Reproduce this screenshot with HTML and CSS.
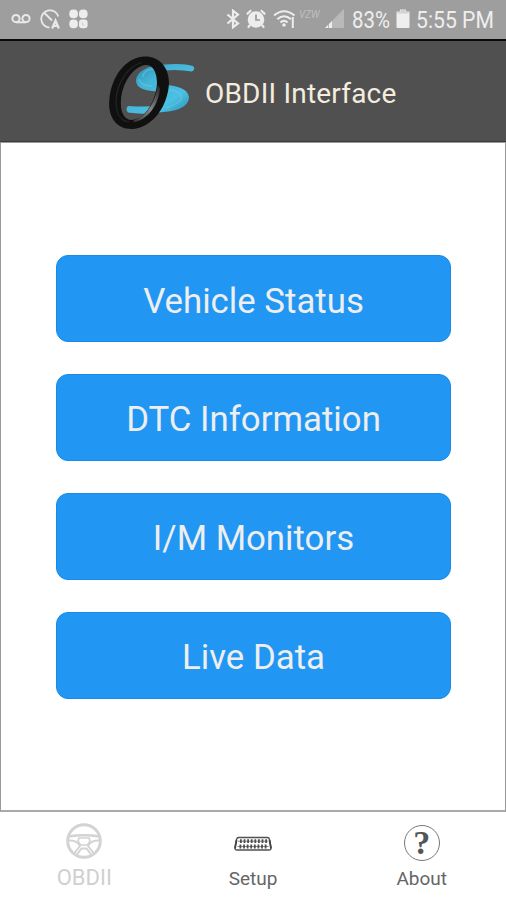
FILE: index.html
```html
<!DOCTYPE html>
<html lang="en">
<head>
    <meta charset="UTF-8">
    <title>OBDII Interface</title>
    <link rel="stylesheet" href="styles.css">
</head>
<body>
<div class="status-bar">
    <div class="status-left">
        <svg width="20" height="20" viewBox="0 0 20 20" fill="none" stroke="#e9e9e9" stroke-width="2">
            <circle cx="5" cy="9.5" r="3.6"/>
            <circle cx="15" cy="9.5" r="3.6"/>
            <path d="M5 13.3h10"/>
        </svg>
        <svg width="20" height="20" viewBox="0 0 20 20" fill="none" stroke="#e9e9e9" stroke-width="1.8">
            <path d="M18.3 7.5A8.7 8.7 0 1 0 9.5 18.7M4 3.5l8 8"/>
            <path d="M12.1 19.5l3.4-8 3.4 8M13.3 16.8h4.4" stroke-width="2.2"/>
        </svg>
        <svg width="19" height="20" viewBox="0 0 19 20" fill="#ededed">
            <rect x="0.3" y="0.5" width="8.6" height="8.8" rx="4"/>
            <rect x="10" y="0.5" width="8.6" height="8.8" rx="4"/>
            <rect x="0.3" y="10.5" width="8.6" height="8.8" rx="4"/>
            <rect x="10" y="10.5" width="8.6" height="8.8" rx="3"/>
            <path d="M13.5 13v3h2" fill="none" stroke="#d0d0d0"/>
        </svg>
    </div>
    <div class="status-right">
        <svg width="14" height="20" viewBox="0 0 14 20" fill="none" stroke="#ededed" stroke-width="2.2">
            <path d="M1.5 5.5L12 14.5L7 18.3V1.7L12 5.5L1.5 14.5"/>
        </svg>
        <svg class="alarm" width="20" height="20" viewBox="0 0 20 20">
            <circle cx="10" cy="10.5" r="8.3" fill="#ededed"/>
            <path d="M0.8 5.2L5.2 1.2M19.2 5.2L14.8 1.2M4 16l-2 2.7M16 16l2 2.7" stroke="#ededed" stroke-width="2.2"/>
            <path d="M10 5.5V11h4" fill="none" stroke="#999" stroke-width="1.7"/>
        </svg>
        <svg class="wifi" width="23" height="20" viewBox="0 0 23 20" fill="none" stroke="#ededed" stroke-width="2">
            <path d="M1 6.5Q11 -2 21.5 6.5M4.3 10.2Q11 4.2 18 10.2M7.4 13.5Q11 10.3 14.6 13.5"/>
            <circle cx="11" cy="16" r="1.8" fill="#ededed" stroke="none"/>
            <path d="M19.8 8v11" stroke-width="2"/>
        </svg>
        <span class="carrier">VZW</span>
        <svg class="signal" width="20" height="20" viewBox="0 0 20 20">
            <path d="M0 19L19 0V19z" fill="#b9b9b9"/>
            <path d="M0 19L3 16V19zM4 19V15L7 12V19z" fill="#ededed"/>
        </svg>
        <span class="percent">83%</span>
        <svg class="battery" width="14" height="20" viewBox="0 0 14 20">
            <path d="M4 0.5h6v2h2.5q1 0 1 1V18q0 1-1 1H1.5q-1 0-1-1V3.5q0-1 1-1H4z" fill="#eee"/>
            <path d="M4.5 1h5v2h3v1.5h-11V3h3z" fill="#d2d2d2"/>
        </svg>
        <span class="clock">5:55 PM</span>
    </div>
</div>

<div class="header">
    <svg class="logo" width="90" height="80" viewBox="0 0 90 80">
        <defs>
            <linearGradient id="blue" x1="0" y1="0" x2="1" y2="1">
                <stop offset="0" stop-color="#2489a8"/>
                <stop offset="0.35" stop-color="#45b4d6"/>
                <stop offset="0.7" stop-color="#4bc0e3"/>
                <stop offset="1" stop-color="#238aaa"/>
            </linearGradient>
            <linearGradient id="face" x1="1" y1="0" x2="0" y2="1">
                <stop offset="0" stop-color="#222"/>
                <stop offset="0.5" stop-color="#858585"/>
                <stop offset="1" stop-color="#303030"/>
            </linearGradient>
        </defs>
        <path d="M84 11Q75 8 55 9.5C38 10 28 17 27 25C27 34 37 35.5 47 36.5L54 46C50 51 40 52.5 19 51Q16 54 19 57.5Q34 60 54 57C70 56 80 51 80 42C79 34 69 31 58 30L51 29C46 27 47 18 55 15.5Q69 14 83 16.5Q87 14 84 11z" fill="url(#blue)"/>
        <path d="M34 22Q34 15 44 14M30 24Q32 31 43 31M61 35Q78 38 70 47Q64 51 57 53" fill="none" stroke="#6acbe8" stroke-width="1.5" opacity=".5"/>
        <path fill-rule="evenodd" fill="#101010" d="M33 1.7C49 0 60 11 60 28C59 51 44 72 24 74C7 75 -2 61 .5 43C3 21 16 4 33 1.7zM36 10C24 12 13 28 12 45C11 57 15 65 23 65C37 64 47 45 48 28C48 16 43 9 36 10z"/>
        <path d="M48.5 30C47 47 37 62 25 65L24 67C38 66 50 50 51 33z" fill="url(#face)"/>
        <path d="M33 7.500C19 11 7 29 7 47C7 59 12 66 20 67" fill="none" stroke="#252525" stroke-width="1.2"/>
    </svg>
    <h1>OBDII Interface</h1>
</div>

<div class="menu">
    <button class="menu-button">Vehicle Status</button>
    <button class="menu-button">DTC Information</button>
    <button class="menu-button">I/M Monitors</button>
    <button class="menu-button">Live Data</button>
</div>

<div class="tabs">
    <div class="tab active">
        <svg width="38" height="38" viewBox="0 0 38 38" fill="none" stroke="#d3d3d3" stroke-width="2">
            <circle cx="19" cy="19" r="16.3" stroke-width="3"/>
            <path d="M3.5 14.5Q19 12 34.500 14.5" stroke-width="2.4"/>
            <path d="M4 18.5Q12 18 15 24L9.500 31M34 18.5Q26 18 23 24L28.5 31"/>
            <path d="M14 16h10l1 3-2.500 4h-7L13 19z" stroke-width="1.6"/>
            <path d="M12 32.500l4.500-6h5l4.500 6"/>
        </svg>
        <span>OBDII</span>
    </div>
    <div class="tab">
        <svg class="plug" width="38" height="38" viewBox="0 0 38 38" fill="none" stroke="#505050">
            <path d="M4.5 12.5h29q1.5 0 2 2l1.5 8q.3 2.5-2 2.5H3q-2.3 0-2-2.5l1.5-8q.5-2 2-2z" stroke-width="1.3"/>
            <path d="M2.5 15L1 23.5M35.5 15L37 23.5" stroke="#444" stroke-width="1.8"/>
            <path d="M6 16.200h27M5.5 21.5h28" stroke-width="3.8" stroke-dasharray="1.8 1.8"/>
            <path d="M4 16.2h30M3.500 21.5h31" stroke-width=".7"/>
        </svg>
        <span>Setup</span>
    </div>
    <div class="tab">
        <div class="help">?</div>
        <span>About</span>
    </div>
</div>
</body>
</html>
```

FILE: styles.css
```css
* {
    box-sizing: border-box;
}

body {
    display: flex;
    flex-direction: column;
    height: 900px;
    margin: 0;
    overflow: hidden;
    font-family: Roboto, "Liberation Sans", sans-serif;
    background-color: #fff;
}

svg {
    display: block;
    flex: none;
}

.status-bar {
    display: flex;
    justify-content: space-between;
    height: 41px;
    padding: 9px 12px 0 11px;
    background-color: #9e9e9e;
    border-bottom: 2px solid #090909;
}

.status-left,
.status-right {
    display: flex;
    height: 20px;
    line-height: 23px;
}

.status-left {
    gap: 9px;
}

.status-right {
    color: #eee;
    font-size: 23px;
    white-space: nowrap;
}

.alarm {
    margin-left: 6px;
}

.wifi {
    margin-left: 7px;
}

.carrier {
    width: 22px;
    margin-left: 3px;
    color: #bfbfbf;
    font-size: 10px;
    font-style: italic;
    line-height: 12px;
}

.signal {
    margin-left: 4px;
}

.percent {
    width: 39px;
    margin-left: 7px;
    transform: scaleX(0.89);
    transform-origin: left;
}

.battery {
    margin-left: 5px;
}

.clock {
    width: 78px;
    margin-left: 6px;
    transform: scaleX(0.92);
    transform-origin: left;
}

.header {
    display: flex;
    height: 101px;
    padding: 14px 0 0 109px;
    background-color: #505050;
    border-bottom: 1px solid #3c3c3c;
}

.header h1 {
    margin: 22px 0 0 6px;
    color: #f3ecdf;
    font-size: 28px;
    font-weight: 400;
    letter-spacing: 0.2px;
    line-height: 34px;
    white-space: nowrap;
}

.menu {
    display: flex;
    flex-direction: column;
    gap: 31.9px;
    height: 670px;
    padding: 112px 54px 0 55px;
    border: 1px solid #999;
    border-bottom: 2px solid #aaa;
}

.menu-button {
    flex: none;
    height: 87px;
    padding: 4px 0 0;
    border: 1px solid #188bea;
    border-radius: 12px;
    background-color: #2196f3;
    color: #eee;
    font-family: inherit;
    font-size: 34.8px;
}

.tabs {
    display: flex;
    height: 88px;
    padding-top: 10px;
}

.tab {
    display: flex;
    flex: 1;
    flex-direction: column;
    align-items: center;
    color: #666;
    font-size: 19px;
    line-height: 24px;
}

.tab span {
    margin-top: 7px;
}

.tab.active {
    color: #d0d0d0;
    font-size: 22px;
}

.tab.active span {
    margin-top: 6px;
}

.plug {
    margin: 3px 0 -3px;
}

.help {
    width: 36px;
    height: 36px;
    margin: 3px 0 -1px;
    border: 1px solid #777;
    border-radius: 50%;
    color: #555;
    font-family: "Liberation Serif", serif;
    font-size: 34px;
    font-weight: bold;
    line-height: 34px;
    text-align: center;
}
```
